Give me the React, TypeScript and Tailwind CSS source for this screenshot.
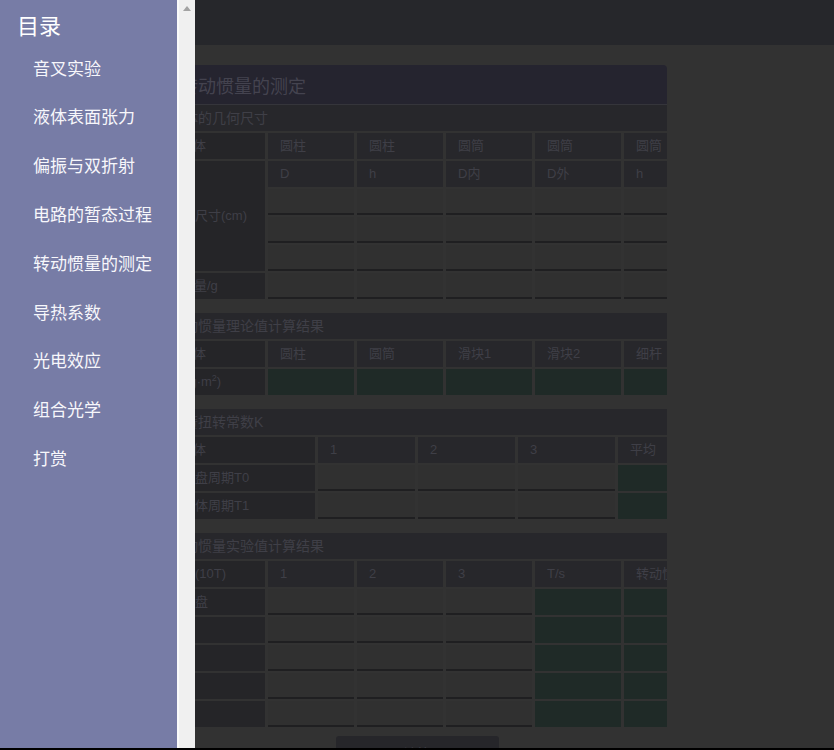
import React from "react";

const dark = "bg-[#27272b] text-[#3f3f47] text-[13px] flex items-center pl-[12px] whitespace-nowrap";
const label = "bg-[#252528] text-[#3f3f47] text-[13px] flex items-center pl-[2px] whitespace-nowrap";
const input = "bg-[#303030] border-b-2 border-[#1f1f21]";
const green = "bg-[#1f2a27]";

function SectionHeader({ children }: { children: React.ReactNode }) {
  return (
    <div className="h-[26px] bg-[#27272b] flex items-center pl-[3px] text-[14px] text-[#3f3f47] whitespace-nowrap">
      {children}
    </div>
  );
}

function App() {
  const menu = [
    "音叉实验",
    "液体表面张力",
    "偏振与双折射",
    "电路的暂态过程",
    "转动惯量的测定",
    "导热系数",
    "光电效应",
    "组合光学",
    "打赏",
  ];
  const six = "grid grid-cols-[98px_86px_86px_86px_86px_86px] gap-x-[3px] gap-y-[2px] auto-rows-[26px] mt-[2px]";
  return (
    <div className="relative h-[750px] w-[834px] overflow-hidden bg-[#323232] font-['Liberation_Sans','Noto_Sans_CJK_SC',sans-serif]">
      {/* page (dimmed) */}
      <div className="h-[45px] bg-[#26272b]" />
      <div className="w-[500px] mx-auto mt-[20px]">
        <div className="h-[40px] bg-[#25242f] rounded-t-[4px] border-b border-[#35353b] flex items-center pl-[13px] pt-[6px] text-[18px] text-[#44434f]">
          转动惯量的测定
        </div>
        <div className="overflow-hidden">
          {/* table 1 */}
          <SectionHeader>刚体的几何尺寸</SectionHeader>
          <div className={six}>
            <div className={label + " pl-[13px]"}>物体</div>
            <div className={dark}>圆柱</div>
            <div className={dark}>圆柱</div>
            <div className={dark}>圆筒</div>
            <div className={dark}>圆筒</div>
            <div className={dark}>圆筒</div>
            <div className={label + " row-span-4"}>几何尺寸(cm)</div>
            <div className={dark}>D</div>
            <div className={dark}>h</div>
            <div className={dark}>D内</div>
            <div className={dark}>D外</div>
            <div className={dark}>h</div>
            {Array.from({ length: 15 }).map((_, i) => (
              <div key={i} className={input} />
            ))}
            <div className={label + " pl-[14px]"}>质量/g</div>
            {Array.from({ length: 5 }).map((_, i) => (
              <div key={i} className={input} />
            ))}
          </div>

          {/* table 2 */}
          <div className="mt-[14px]">
            <SectionHeader>转动惯量理论值计算结果</SectionHeader>
            <div className={six}>
              <div className={label + " pl-[13px]"}>物体</div>
              <div className={dark}>圆柱</div>
              <div className={dark}>圆筒</div>
              <div className={dark}>滑块1</div>
              <div className={dark}>滑块2</div>
              <div className={dark}>细杆</div>
              <div className={label + " pl-[8px]"}>
                I(kg·m<sup className="text-[9px]">2</sup>)
              </div>
              {Array.from({ length: 5 }).map((_, i) => (
                <div key={i} className={green} />
              ))}
            </div>
          </div>

          {/* table 3 */}
          <div className="mt-[14px]">
            <SectionHeader>弹簧扭转常数K</SectionHeader>
            <div className="grid grid-cols-[148px_97px_97px_97px_97px] gap-x-[3px] gap-y-[2px] auto-rows-[26px] mt-[2px]">
              <div className={label + " pl-[13px]"}>物体</div>
              <div className={dark}>1</div>
              <div className={dark}>2</div>
              <div className={dark}>3</div>
              <div className={dark}>平均</div>
              <div className={label}>载物盘周期T0</div>
              <div className={input} />
              <div className={input} />
              <div className={input} />
              <div className={green} />
              <div className={label}>圆柱体周期T1</div>
              <div className={input} />
              <div className={input} />
              <div className={input} />
              <div className={green} />
            </div>
          </div>

          {/* table 4 */}
          <div className="mt-[14px]">
            <SectionHeader>转动惯量实验值计算结果</SectionHeader>
            <div className={six}>
              <div className={label}>周期(10T)</div>
              <div className={dark}>1</div>
              <div className={dark}>2</div>
              <div className={dark}>3</div>
              <div className={dark}>T/s</div>
              <div className={dark}>转动惯量</div>
              {["载物盘", "圆柱", "圆筒", "滑块", "细杆"].map((n) => (
                <React.Fragment key={n}>
                  <div className={label}>{n}</div>
                  <div className={input} />
                  <div className={input} />
                  <div className={input} />
                  <div className={green} />
                  <div className={green} />
                </React.Fragment>
              ))}
            </div>
          </div>

          <div className="flex justify-center mt-[9px]">
            <div className="w-[163px] h-[36px] bg-[#26262a] rounded-[3px] flex items-center justify-center text-[14px] text-[#3f3f47]">
              计算
            </div>
          </div>
        </div>
      </div>

      {/* drawer over the dimmed page */}
      <div className="absolute left-0 top-0 h-[750px] flex">
        <div className="w-[177px] h-full bg-[#777ca6] text-white">
          <div className="h-[45px] flex items-center pl-[17px] pt-[8px] text-[22px] leading-none">目录</div>
          <div>
            {menu.map((m) => (
              <div key={m} className="h-[48.8px] flex items-center pl-[33px] text-[17px] text-[#f7f7fb]">
                {m}
              </div>
            ))}
          </div>
        </div>
        <div className="w-[18px] h-full bg-[#f0f0f0] border-l-[2px] border-[#fafafa] flex justify-center pt-[6px]">
          <svg width="8" height="5" viewBox="0 0 8 5">
            <polygon points="4,0 8,5 0,5" fill="#a3a3a3" />
          </svg>
        </div>
      </div>

      <div className="absolute left-0 bottom-0 w-full h-[2px] bg-black" />
    </div>
  );
}

export default App;
